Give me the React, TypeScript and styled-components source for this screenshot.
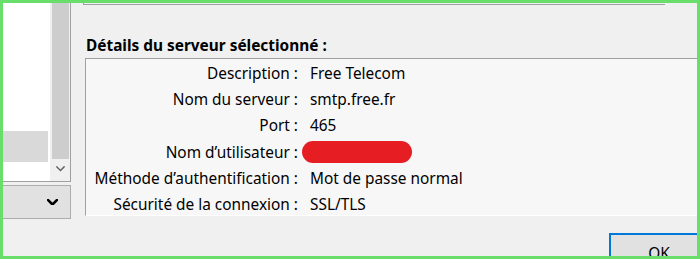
import React from "react";
import styled, { createGlobalStyle } from "styled-components";

const Global = createGlobalStyle`
  html, body { margin: 0; padding: 0; background: #f0f0f0; }
  * { box-sizing: border-box; }
`;

const FONT = `"Noto Sans", "Open Sans", sans-serif`;

const Frame = styled.div`
  width: 700px;
  height: 259px;
  border: 3px solid #6ade6a;
  background: #f0f0f0;
  overflow: hidden;
  display: grid;
  grid-template-columns: 68px 1fr;
  font-family: ${FONT};
  color: #000;
`;

const LeftCol = styled.div`
  display: flex;
  flex-direction: column;
  gap: 3px;
`;

const ListBox = styled.div`
  height: 179px;
  background: #fff;
  border-right: 1px solid #a0a0a0;
  border-bottom: 1px solid #a0a0a0;
  display: flex;
`;

const ListItems = styled.div`
  flex: 1;
  display: flex;
  flex-direction: column;
  padding-top: 128px;
  padding-right: 2px;
`;

const ListRow = styled.div<{ $selected?: boolean }>`
  height: 31px;
  background: ${(p) => (p.$selected ? "#d9d9d9" : "transparent")};
`;

const ScrollBar = styled.div`
  width: 20px;
  background: #f0f0f0;
  display: flex;
  flex-direction: column;
  align-items: center;
`;

const Thumb = styled.div`
  width: 17px;
  height: 156px;
  background: #cdcdcd;
`;

const ScrollArrow = styled.div`
  flex: 1;
  display: flex;
  align-items: center;
  justify-content: center;
  padding-bottom: 2px;
`;

const Combo = styled.div`
  height: 34px;
  background: #e1e1e1;
  border: 1px solid #adadad;
  border-left: none;
  display: flex;
  align-items: center;
  justify-content: flex-end;
  padding-right: 12px;
`;

const RightCol = styled.div`
  display: flex;
  flex-direction: column;
  align-items: flex-start;
`;

const TopStrip = styled.div`
  margin-left: 12px;
  width: 582px;
  height: 2px;
  border-left: 1px solid #a0a0a0;
  border-bottom: 1px solid #a0a0a0;
`;

const Heading = styled.div`
  margin-top: 32px;
  margin-left: 15px;
  height: 18px;
  line-height: 18px;
  font-size: 15.4px;
  font-weight: 700;
  white-space: nowrap;
`;

const DetailsBox = styled.div`
  margin-top: 3px;
  margin-left: 14px;
  width: 640px;
  height: 158px;
  background: #f7f7f7;
  border-top: 1px solid #a0a0a0;
  border-left: 1px solid #a0a0a0;
  border-bottom: 1px solid #ffffff;
  display: grid;
  grid-template-columns: 212px 1fr;
  grid-auto-rows: 26.3px;
  column-gap: 12px;
  align-items: center;
  padding-top: 1px;
  font-size: 15.4px;
`;

const Label = styled.div`
  text-align: right;
  white-space: nowrap;
`;

const Value = styled.div`
  white-space: nowrap;
  display: flex;
  align-items: center;
`;

const Redacted = styled.span`
  display: inline-block;
  width: 110px;
  height: 22px;
  border-radius: 11px;
  background: #e61e24;
  margin-left: -8px;
`;

const OkButton = styled.div`
  margin-top: 17px;
  margin-left: 538px;
  width: 100px;
  height: 40px;
  flex: none;
  border: 2px solid #0078d7;
  background: #e1e1e1;
  display: flex;
  align-items: center;
  justify-content: center;
  font-size: 15.4px;
`;

const Chevron = ({ size, stroke, color }: { size: number; stroke: number; color: string }) => (
  <svg width={size} height={size * 0.6} viewBox="0 0 10 6">
    <path d="M1 1 L5 5 L9 1" fill="none" stroke={color} strokeWidth={stroke} strokeLinecap="square" />
  </svg>
);

const rows: [string, React.ReactNode][] = [
  ["Description :", "Free Telecom"],
  ["Nom du serveur :", "smtp.free.fr"],
  ["Port :", "465"],
  ["Nom d’utilisateur :", <Redacted key="r" />],
  ["Méthode d’authentification :", "Mot de passe normal"],
  ["Sécurité de la connexion :", "SSL/TLS"],
];

export default function App() {
  return (
    <>
      <Global />
      <Frame>
        <LeftCol>
          <ListBox>
            <ListItems>
              <ListRow $selected />
            </ListItems>
            <ScrollBar>
              <Thumb />
              <ScrollArrow>
                <Chevron size={9} stroke={1.6} color="#606060" />
              </ScrollArrow>
            </ScrollBar>
          </ListBox>
          <Combo>
            <Chevron size={11} stroke={2.4} color="#000" />
          </Combo>
        </LeftCol>
        <RightCol>
          <TopStrip />
          <Heading>Détails du serveur sélectionné :</Heading>
          <DetailsBox>
            {rows.map(([l, v]) => (
              <React.Fragment key={l}>
                <Label>{l}</Label>
                <Value>{v}</Value>
              </React.Fragment>
            ))}
          </DetailsBox>
          <OkButton>OK</OkButton>
        </RightCol>
      </Frame>
    </>
  );
}
